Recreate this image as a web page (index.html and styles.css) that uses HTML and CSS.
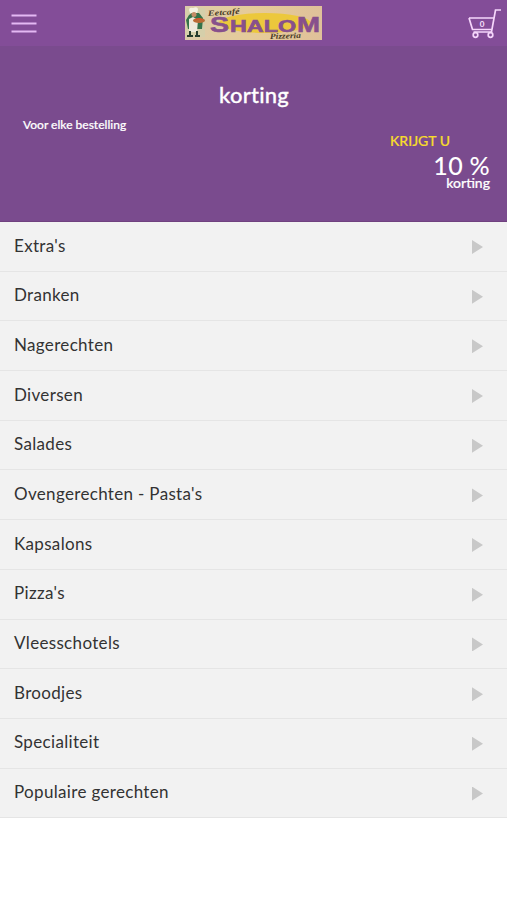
FILE: index.html
```html
<!DOCTYPE html>
<html lang="nl">
<head>
<meta charset="utf-8">
<title>Eetcafé Shalom</title>
<link rel="stylesheet" href="styles.css">
</head>
<body>
<header class="bar">
  <svg class="menu-icon" width="26" height="22" viewBox="0 0 26 22"><path d="M.5 2.500h25M.5 10.500h25M.5 18.500h25"/></svg>
  <svg class="logo" width="137" height="34" viewBox="0 0 137 34">
    <defs><linearGradient id="paper"><stop offset="0" stop-color="#dccbaa"/><stop offset=".5" stop-color="#e6cb98"/><stop offset="1" stop-color="#dfc19a"/></linearGradient></defs>
    <rect width="137" height="34" fill="url(#paper)"/>
    <ellipse cx="80" cy="17" rx="46" ry="10" fill="#ecc83c"/>
    <path d="M1 2h19v29H1z" fill="#d5cfaa"/>
    <path d="M4 9l3-2h7l4 5-1 11H3L1 14z" fill="#34734a"/>
    <path d="M4 4q0-3 4-2 5-2 5 2l-1 3H5z" fill="#f5f2e2"/>
    <circle cx="9" cy="8.500" r="2.500" fill="#c48c66"/>
    <path d="M4 13l4-2 5 3-1 12H4z" fill="#eeeadb"/>
    <ellipse cx="14" cy="14.500" rx="6" ry="2.500" fill="#b96c35"/>
    <path d="M10 14q4-3 8 0" stroke="#df4d2b" fill="none"/>
    <path d="M5 25v5M12 25v5M2 30h6M10 30h5" stroke="#253b2d" stroke-width="2"/>
    <text class="logo-script" x="23" y="10" textLength="32" lengthAdjust="spacingAndGlyphs" transform="rotate(-4 23 10)">Eetcafé</text>
    <text class="logo-name" x="25" y="26" font-size="22" textLength="19" lengthAdjust="spacingAndGlyphs">S</text>
    <text class="logo-name" x="45" y="26" font-size="16" textLength="66" lengthAdjust="spacingAndGlyphs">HALO</text>
    <text class="logo-name" x="112" y="26" font-size="22" textLength="23" lengthAdjust="spacingAndGlyphs">M</text>
    <text class="logo-script" x="85" y="33" textLength="31" lengthAdjust="spacingAndGlyphs" transform="rotate(-2 85 33)">Pizzeria</text>
  </svg>
  <svg class="cart-icon" width="34" height="32" viewBox="0 0 34 32">
    <path d="M33 2h-5.500l-4 22H5.500M1 10h25M1 10l3.500 11.500H24"/>
    <circle cx="7.500" cy="27" r="2.300"/><circle cx="22.500" cy="27" r="2.300"/>
    <text x="14" y="19">0</text>
  </svg>
</header>
<section class="promo">
  <h1 class="promo-title">korting</h1>
  <p class="promo-note">Voor elke bestelling</p>
  <p class="promo-lead">KRIJGT U</p>
  <p class="promo-value">10 %</p>
  <p class="promo-unit">korting</p>
</section>
<ul class="list">
  <li class="row"><span>Extra's</span><i class="arrow"></i></li>
  <li class="row"><span>Dranken</span><i class="arrow"></i></li>
  <li class="row"><span>Nagerechten</span><i class="arrow"></i></li>
  <li class="row"><span>Diversen</span><i class="arrow"></i></li>
  <li class="row"><span>Salades</span><i class="arrow"></i></li>
  <li class="row"><span>Ovengerechten - Pasta's</span><i class="arrow"></i></li>
  <li class="row"><span>Kapsalons</span><i class="arrow"></i></li>
  <li class="row"><span>Pizza's</span><i class="arrow"></i></li>
  <li class="row"><span>Vleesschotels</span><i class="arrow"></i></li>
  <li class="row"><span>Broodjes</span><i class="arrow"></i></li>
  <li class="row"><span>Specialiteit</span><i class="arrow"></i></li>
  <li class="row"><span>Populaire gerechten</span><i class="arrow"></i></li>
</ul>
</body>
</html>
```
FILE: styles.css
```css
* { box-sizing: border-box; }
body { margin: 0; background: #fff; font-family: Lato, sans-serif; color: #333; }
h1, p, ul { margin: 0; padding: 0; }
.bar {
  display: flex;
  justify-content: space-between;
  height: 46px;
  padding: 6px 5px 0 11px;
  background: #834d98;
}
.menu-icon { margin-top: 7px; fill: none; stroke: #e4b9f3; stroke-width: 2; }
.logo { margin-left: 1px; }
.logo-script { font: italic bold 8px "Liberation Serif", serif; fill: #493b27; }
.logo-name { font-family: "Liberation Sans", sans-serif; font-weight: bold; fill: #87508c; stroke: #87508c; stroke-width: .6; }
.cart-icon { margin-top: 2px; fill: none; stroke: #f5d6fb; stroke-width: 1.7; }
.cart-icon text { font: bold 8px Lato, sans-serif; text-anchor: middle; fill: #f8e3ff; stroke: none; }
.promo {
  display: flex;
  flex-direction: column;
  height: 176px;
  padding: 35px 17px 0 23px;
  background: #7a4b8e;
  border-bottom: 1px solid #70417f;
  color: #fff;
  font-weight: 500;
}
.promo-title { margin-left: -5px; font-size: 22px; font-weight: 500; line-height: 28px; text-align: center; letter-spacing: .2px; -webkit-text-stroke: .3px; }
.promo-note { margin-top: 8px; font-size: 12px; line-height: 16px; -webkit-text-stroke: .2px; }
.promo-lead { align-self: flex-end; margin-right: 40px; font-size: 14px; line-height: 16px; color: #f7dc2c; -webkit-text-stroke: .2px; }
.promo-value { align-self: flex-end; margin-top: 4px; font-size: 25px; line-height: 24px; letter-spacing: .3px; }
.promo-unit { align-self: flex-end; margin-top: -2px; font-size: 14px; line-height: 16px; -webkit-text-stroke: .2px; }
.list { list-style: none; }
.row {
  display: flex;
  justify-content: space-between;
  height: 49.7px;
  padding: 12.6px 24px 0 14px;
  background: #f2f2f2;
  border-bottom: 1px solid #e5e5e5;
  font-size: 17px;
  line-height: 21px;
  letter-spacing: .33px;
}
.arrow { width: 11px; height: 14px; margin-top: 5.4px; background: #c8c8c8; clip-path: polygon(0 0, 100% 50%, 0 100%); }
```
